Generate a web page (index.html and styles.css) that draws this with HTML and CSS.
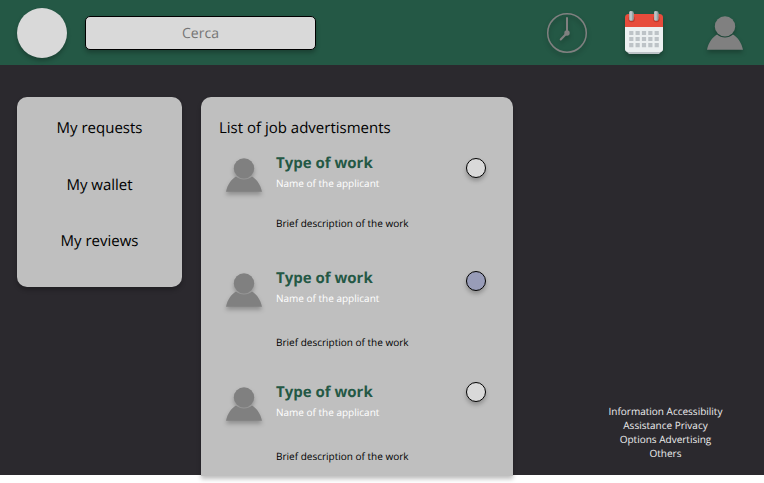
FILE: index.html
```html
<!DOCTYPE html>
<html lang="en">
<head>
<meta charset="utf-8">
<title>Job advertisments</title>
<link rel="stylesheet" href="styles.css">
</head>
<body>
<svg width="0" height="0" class="defs">
  <symbol id="person" viewBox="0 0 36 34">
    <path d="M0 33.8C1.5 27 5 21.500 10 18.600C14.500 22.500 21.500 22.500 26 18.600C31 21.500 34.500 27 36 33.800Z"/>
    <circle cx="18" cy="10.400" r="10.200"/>
  </symbol>
</svg>
<div class="page">
  <header class="topbar">
    <div class="logo"></div>
    <input class="search" type="text" placeholder="Cerca">
    <nav class="actions">
      <svg class="clock" viewBox="0 0 40 40">
        <circle cx="20" cy="20" r="19.300" fill="none" stroke="#808080" stroke-width="1.500"/>
        <path d="M20 20V5M20 20L13.700 26.500" fill="none" stroke="#808080" stroke-width="2" stroke-linecap="round"/>
        <circle cx="20" cy="20" r="2.700" fill="#808080"/>
      </svg>
      <svg class="calendar" viewBox="0 0 38 43">
        <path d="M0 15.500H38V39L34 43H4L0 39Z" fill="#bdc3c7"/>
        <path d="M0 15.500H38V37.500Q38 41 34.500 41H3.500Q0 41 0 37.500Z" fill="#ecf0f1"/>
        <path d="M3.500 3H34.500Q38 3 38 6.500V16H0V6.500Q0 3 3.500 3Z" fill="#e74c3c"/>
        <g fill="#c0392b"><circle cx="6.600" cy="8" r="3.200"/><circle cx="31.400" cy="8" r="3.200"/></g>
        <g fill="#95a5a6"><rect x="4.400" y="0" width="4.400" height="10" rx="2.200"/><rect x="29.200" y="0" width="4.400" height="10" rx="2.200"/></g>
        <g fill="#bdc3c7"><rect x="4.400" y="0" width="2.500" height="9.500" rx="1.200"/><rect x="29.200" y="0" width="2.500" height="9.500" rx="1.200"/></g>
        <path d="M4.200 22H34M4.200 28H34M4.200 34.200H34" stroke="#bdc3c7" stroke-width="4.200" stroke-dasharray="4.200 2.150"/>
      </svg>
      <svg class="person"><use href="#person"/></svg>
    </nav>
  </header>
  <div class="content">
    <aside class="menu">
      <a>My requests</a>
      <a>My wallet</a>
      <a>My reviews</a>
    </aside>
    <main class="jobs">
      <h1>List of job advertisments</h1>
      <article class="job first">
        <svg class="person"><use href="#person"/></svg>
        <div class="details">
          <h2>Type of work</h2>
          <p class="name">Name of the applicant</p>
          <p class="brief">Brief description of the work</p>
        </div>
        <span class="radio"></span>
      </article>
      <article class="job selected">
        <svg class="person"><use href="#person"/></svg>
        <div class="details">
          <h2>Type of work</h2>
          <p class="name">Name of the applicant</p>
          <p class="brief">Brief description of the work</p>
        </div>
        <span class="radio"></span>
      </article>
      <article class="job last">
        <svg class="person"><use href="#person"/></svg>
        <div class="details">
          <h2>Type of work</h2>
          <p class="name">Name of the applicant</p>
          <p class="brief">Brief description of the work</p>
        </div>
        <span class="radio"></span>
      </article>
    </main>
    <footer class="links">Information Accessibility<br>Assistance Privacy<br>Options Advertising<br>Others</footer>
  </div>
</div>
</body>
</html>
```
FILE: styles.css
```css
* { box-sizing: border-box; }
html { background: #fff; }
body {
  margin: 0;
  height: 483px;
  overflow: hidden;
  font-family: "Open Sans", "Noto Sans", sans-serif;
  text-rendering: geometricPrecision;
  color: #000;
}
h1, h2, p { margin: 0; font-weight: 400; }
svg { display: block; overflow: visible; }
.defs { display: none; }
.page { height: 475px; background: #2b292e; }
.topbar {
  display: flex;
  height: 65px;
  padding: 8px 21px 0 17px;
  background: #245845;
}
.logo {
  width: 50px;
  height: 50px;
  border-radius: 50%;
  background: #d9d9d9;
  box-shadow: 0 3px 4px rgba(0, 0, 0, .25);
}
.search {
  width: 231px;
  height: 34px;
  margin: 8px 0 0 18px;
  padding: 0;
  border: 1px solid #000;
  border-radius: 5px;
  background: #d9d9d9;
  box-shadow: 0 3px 4px rgba(0, 0, 0, .25);
  font: 14px "Open Sans", sans-serif;
  text-rendering: geometricPrecision;
  text-align: center;
}
.search::placeholder { color: #757575; }
.actions {
  display: flex;
  align-items: flex-start;
  margin-left: auto;
}
.actions svg, .job svg { filter: drop-shadow(0 3px 2px rgba(0, 0, 0, .25)); }
.clock { width: 40px; height: 40px; margin-top: 5px; }
.calendar { width: 38px; height: 43px; margin: 3px 44px 0 38px; }
.person { width: 36px; height: 34px; fill: #808080; }
.actions .person { margin-top: 7.500px; }
.content {
  display: flex;
  align-items: flex-start;
  padding: 32px 0 0 17px;
}
.menu {
  display: flex;
  flex-direction: column;
  align-items: center;
  width: 165px;
  height: 190px;
  padding-top: 3px;
  border-radius: 10px;
  background: #bfbfbf;
  box-shadow: 0 3px 4px rgba(0, 0, 0, .25);
  font-size: 15px;
  line-height: 56.500px;
}
.jobs {
  width: 312px;
  height: 379px;
  margin-left: 19px;
  padding: 20px 27px 0 18px;
  border-radius: 10px 10px 0 0;
  background: #bfbfbf;
  box-shadow: 0 3px 4px rgba(0, 0, 0, .25);
}
.jobs h1 { height: 36px; font-size: 15px; line-height: 22px; }
.job {
  display: grid;
  grid-template-columns: 36px 1fr 20px;
  column-gap: 14px;
  height: 114px;
  padding-left: 7px;
}
.first { height: 115px; }
.job svg { margin-top: 4.500px; }
.job h2 { font-size: 15px; font-weight: 700; line-height: 20px; color: #245845; }
.job p { font-size: 10px; line-height: 14px; }
.job .name { margin-top: 3px; color: #fff; }
.job .brief { margin-top: 30px; }
.first .brief { margin-top: 26px; }
.radio {
  width: 20px;
  height: 20px;
  border: 1px solid #000;
  border-radius: 50%;
  background: #d9d9d9;
  box-shadow: 0 3px 4px rgba(0, 0, 0, .25);
}
.first .radio { margin-top: 5px; }
.selected .radio { margin-top: 3px; background: #989cb8; }
.last .radio { margin-top: 0; }
.links {
  width: 130px;
  margin: 307px 0 0 87.500px;
  color: #eee;
  font-size: 10px;
  line-height: 14px;
  text-align: center;
}
```
